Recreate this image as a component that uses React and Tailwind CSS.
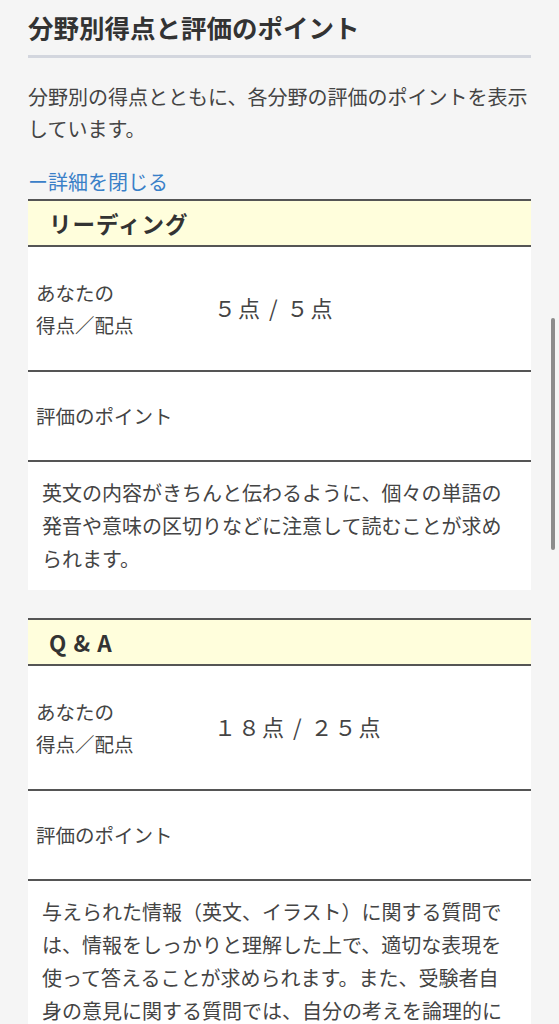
import React from "react";

const sections = [
  {
    name: "リーディング",
    score: "５点 / ５点",
    point:
      "英文の内容がきちんと伝わるように、個々の単語の発音や意味の区切りなどに注意して読むことが求められます。",
  },
  {
    name: "Q & A",
    score: "１８点 / ２５点",
    point:
      "与えられた情報（英文、イラスト）に関する質問では、情報をしっかりと理解した上で、適切な表現を使って答えることが求められます。また、受験者自身の意見に関する質問では、自分の考えを論理的に説明することが求められます。",
  },
];

function ScoreTable({ section }) {
  return (
    <div className="border-t-2 border-[#555]">
      {/* Section name */}
      <div className="bg-[#fffedc] border-b-2 border-[#555] h-[46px] flex items-center pl-[21px]">
        <span className="text-[22.5px] font-bold text-[#333] leading-none tracking-[1px]">{section.name}</span>
      </div>
      {/* Score row */}
      <div className="bg-white border-b-2 border-[#555] flex items-center">
        <div className="w-[186px] shrink-0 pl-[8px] pt-[30px] pb-[29px] text-[19.5px] leading-[32px] text-[#444]">
          あなたの
          <br />
          得点／配点
        </div>
        <div className="text-[22px] text-[#444] tracking-[2px] -mt-[2px]">{section.score}</div>
      </div>
      {/* Point label row */}
      <div className="bg-white border-b-2 border-[#555] pl-[8px] py-[28px] text-[19.5px] leading-[32px] text-[#444]">
        評価のポイント
      </div>
      {/* Point text */}
      <div className="bg-white px-[14px] pt-[14px] pb-[15px] text-[20px] leading-[33px] text-[#444]">
        {section.point}
      </div>
    </div>
  );
}

export default function App() {
  return (
    <div
      className="min-h-screen bg-[#f5f5f5] px-[28px] pt-[9px] pb-10"
      style={{ fontFamily: '"Noto Sans CJK JP", "Noto Sans", sans-serif' }}
    >
      <h2 className="text-[25.5px] font-bold leading-[36px] text-[#333] pb-[10px] border-b-[3px] border-[#d3d6de]">
        分野別得点と評価のポイント
      </h2>
      <p className="mt-[23px] text-[20px] leading-[32px] text-[#444]">
        分野別の得点とともに、各分野の評価のポイントを表示しています。
      </p>
      <div className="mt-[21px] text-[20px] leading-[32px] text-[#3a80c8]">ー詳細を閉じる</div>

      <div className="flex flex-col gap-[28px] mt-px">
        {sections.map((s) => (
          <ScoreTable key={s.name} section={s} />
        ))}
      </div>

      {/* scroll indicator */}
      <div className="fixed right-[4px] top-[318px] h-[232px] w-[4px] rounded-full bg-[#8c8c8c]" />
    </div>
  );
}
